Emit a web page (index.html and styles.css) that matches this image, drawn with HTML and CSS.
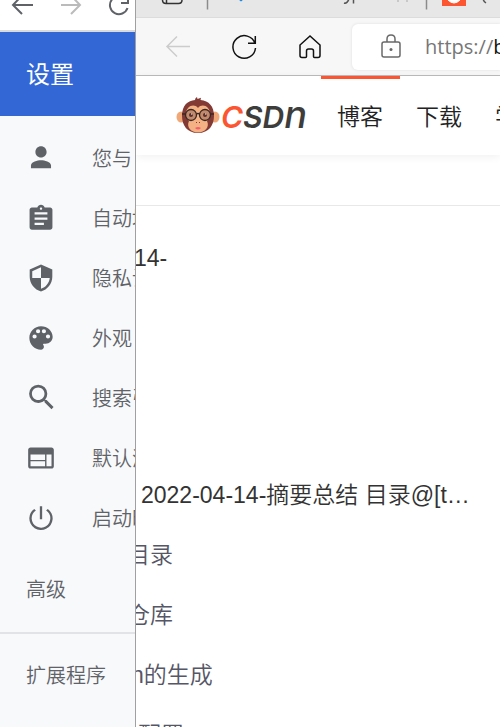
FILE: index.html
```html
<!DOCTYPE html>
<html lang="zh-CN">
<head>
<meta charset="utf-8">
<title>设置</title>
<link rel="stylesheet" href="styles.css">
</head>
<body>
<aside class="settings">
  <div class="settings-bar">
    <svg class="bar-icon" viewBox="0 0 24 24"><path d="M22 11H3M11 1.500 2 11l9 9"/></svg>
    <svg class="bar-icon faded" viewBox="0 0 24 24"><path d="M2 11h18M12 1.500l9 9.500-9 9"/></svg>
    <svg class="bar-icon" viewBox="0 0 24 24"><path d="M18.500 5a9 9 0 1 0 2 9M21 2v7h-7"/></svg>
  </div>
  <h1 class="settings-title">设置</h1>
  <nav class="settings-nav">
    <a class="item" href="#"><svg viewBox="0 0 24 24"><path d="M12 11.500c2.700 0 4.800-2 4.800-4.700S14.700 2 12 2 7.200 4.100 7.200 6.800s2.100 4.700 4.800 4.700zm0 2.500c-3 0-8.600 1.300-8.600 4.500v2.300h17.200v-2.300c0-3.200-5.600-4.500-8.600-4.500z"/></svg><span>您与</span></a>
    <a class="item" href="#"><svg viewBox="0 0 24 24"><path d="M19.800 3h-4.600C14.800 1.800 13.300.6 12 .6S9.200 1.800 8.800 3H4.200c-1.100 0-2 .9-2 2v15c0 1.100.9 2 2 2h15.600c1.100 0 2-.9 2-2V5c0-1.100-.9-2-2-2zM12 3c.6 0 1 .4 1 1s-.4 1-1 1-1-.4-1-1 .4-1 1-1zm2.500 15H6.500v-2h8v2zm3-4.500h-11v-2h11v2zm0-4.500h-11V7h11v2z"/></svg><span>自动填</span></a>
    <a class="item" href="#"><svg viewBox="0 0 24 24"><path d="M12 .5 2.300 4.800v6.200c0 5.900 4.140 11.200 9.700 12.500 5.560-1.300 9.700-6.600 9.700-12.500V4.800L12 .5zm0 11.500h7.500c-.53 4.400-3.580 8.100-7.500 9.200V12H4.500V6.200L12 2.800V12z"/></svg><span>隐私设</span></a>
    <a class="item" href="#"><svg viewBox="0 0 24 24"><path d="M12 2C6.490 2 2 6.490 2 12s4.490 10 10 10c1.380 0 2.500-1.120 2.500-2.500 0-.61-.23-1.200-.64-1.670-.08-.1-.13-.21-.13-.33 0-.28.22-.5.5-.5H16c3.310 0 6-2.690 6-6 0-4.960-4.490-9-10-9zm-5.500 10.500a1.800 1.800 0 1 1 0-3.600 1.800 1.800 0 0 1 0 3.600zm3-4.500a1.800 1.800 0 1 1 0-3.600 1.800 1.800 0 0 1 0 3.600zm5 0a1.800 1.800 0 1 1 0-3.600 1.800 1.800 0 0 1 0 3.600zm3.500 4.500a1.800 1.800 0 1 1 0-3.600 1.800 1.800 0 0 1 0 3.600z"/></svg><span>外观</span></a>
    <a class="item" href="#"><svg viewBox="1.500 2.500 20 20"><path d="M15.500 14h-.79l-.28-.27A6.470 6.470 0 0 0 16 9.500 6.500 6.500 0 1 0 9.500 16c1.610 0 3.090-.59 4.230-1.570l.27.28v.79l5 4.990L20.490 19l-4.990-5zm-6 0C7.010 14 5 11.990 5 9.500S7.010 5 9.500 5 14 7.010 14 9.500 11.990 14 9.500 14z"/></svg><span>搜索引</span></a>
    <a class="item" href="#"><svg viewBox="0 0 24 24"><path d="M21 3H3C1.900 3 1 3.900 1 5v14c0 1.100.9 2 2 2h18c1.100 0 2-.9 2-2V5c0-1.100-.9-2-2-2zm-5.500 16H3v-4.200h12.500V19zm0-5.200H3V9h12.500v4.800zM21 19h-4.300V9H21v10z"/></svg><span>默认浏</span></a>
    <a class="item" href="#"><svg viewBox="0 0 24 24"><path d="M13 2h-2v11h2V2zm4.800 2.200-1.400 1.400A7.960 7.960 0 0 1 20 12a8 8 0 1 1-12.400-6.400L6.200 4.200A9.960 9.960 0 0 0 2 12a10 10 0 1 0 15.800-7.800z"/></svg><span>启动时</span></a>
    <a class="group" href="#">高级</a>
    <a class="group extension" href="#">扩展程序</a>
  </nav>
</aside>
<main class="browser">
  <div class="tabs">
    <svg class="tab-art" viewBox="0 0 364 17" preserveAspectRatio="xMinYMin slice">
      <g fill="none" stroke="#333" stroke-width="1.500"><path d="M26.500-8V0q0 3.500 3.500 3.500h12.500q3.500 0 3.500-3.500v-8M30.500-3v6"/></g>
      <path d="M71.500 0v9.500M290.500 0v9.500" stroke="#8b8b8b" stroke-width="1.500"/>
      <path d="m102-1 3 2.500L108-1" fill="#1687e5"/>
      <path d="M306 0h24v6h-24z" fill="#fc5531"/>
      <path d="M312 0q6 6 12 0" fill="#fff" stroke="#fff" stroke-width="1"/>
      <path d="M208 3q3 1 5-4M217.500-1v4.500M347-2q0 3 3 5" fill="none" stroke="#555" stroke-width="1.500"/>
      <path d="M261 1h2M270 1h2" stroke="#aaa"/>
    </svg>
  </div>
  <div class="toolbar">
    <button class="tool" aria-label="后退"><svg viewBox="0 0 28 28"><path d="M26 13.500H3M13 3.500 3 13.500l10 10" stroke="#ccc"/></svg></button>
    <button class="tool" aria-label="刷新"><svg viewBox="0 0 28 28"><path d="M25 10.500A11.300 11.300 0 1 0 25.500 15M25.300 3v7.300H18" stroke="#111"/></svg></button>
    <button class="tool" aria-label="主页"><svg viewBox="0 0 28 28"><path d="M14 3 4 12v10.500q0 2 2 2h3.500q1 0 1-1V18q0-2 2-2h3q2 0 2 2v5.500q0 1 1 1H22q2 0 2-2V12z" stroke="#111"/></svg></button>
    <div class="address">
      <svg viewBox="0 0 24 28"><path d="M5 9h14q2 0 2 2v11q0 2-2 2H5q-2 0-2-2V11q0-2 2-2zM8 9V6q0-4 4-4t4 4v3" fill="none" stroke="#6a6a6a" stroke-width="1.500"/><circle cx="12" cy="16.500" r="1.500" fill="#666"/></svg>
      <span class="url">https://<b>b</b></span>
    </div>
  </div>
  <header class="site">
    <a class="logo" href="#">
      <svg viewBox="0 0 44 38">
        <ellipse cx="5" cy="20" rx="4.500" ry="5.500" fill="#f0a878"/><ellipse cx="39" cy="20" rx="4.500" ry="5.500" fill="#f0a878"/>
        <path d="M6 19C6 8 12 3.500 19 3q0-2 2-3l.5 2L25 .8 24.500 3C33 4 38 9 38 19c0 9-5 17-16 17S6 28 6 19z" fill="#843a34"/>
        <path d="M22 11c-4-5-12-2-12 6 0 4 2 6 3 7-3 6 2 11.500 9 11.500S34 30 31 24c1-1 3-3 3-7 0-8-8-11-12-6z" fill="#f3b184"/>
        <g stroke="#382725" stroke-width="1.300"><circle cx="15" cy="18" r="5.500" fill="#c28a6a"/><circle cx="29" cy="18" r="5.500" fill="#c28a6a"/><path d="M20.500 17q1.500-1 3 0M6 17h3.500m25 0H38" fill="none"/></g>
        <circle cx="15" cy="18" r="2" fill="#5c2f2c"/><circle cx="29" cy="18" r="2" fill="#5c2f2c"/><circle cx="15.800" cy="17" r=".7" fill="#fff"/><circle cx="29.800" cy="17" r=".7" fill="#fff"/>
        <path d="M20 25.500h1m2 0h1" stroke="#843a34" stroke-width="1.200"/><path d="M19 31q3-2 6 0-3 3-6 0z" fill="#f45f70"/>
      </svg>
      <span class="brand"><span class="brand-c">C</span>SD<span class="brand-n">n</span></span>
    </a>
    <nav class="site-nav"><a class="active" href="#">博客</a><a href="#">下载</a><a href="#">学</a></nav>
  </header>
  <div class="subbar"></div>
  <article class="article">
    <p class="heading">14-</p>
    <h2 class="summary">2022-04-14-摘要总结 目录@[t…</h2>
    <ul class="toc">
      <li>目录</li>
      <li>仓库</li>
      <li class="level-two">n的生成</li>
      <li class="level-three">配置</li>
    </ul>
  </article>
</main>
</body>
</html>
```

FILE: styles.css
```css
* { box-sizing: border-box; }
body {
  margin: 0;
  height: 100vh;
  display: grid;
  grid-template-columns: 136px minmax(0, 1fr);
  overflow: hidden;
  background: #fff;
  font-family: "Liberation Sans", "Noto Sans CJK SC", sans-serif;
}
a { color: inherit; text-decoration: none; }
svg { display: block; flex: none; }

.settings {
  overflow: hidden;
  border-right: 1px solid #a0a0a0;
  background: #f8f9fb;
  color: #5f6368;
  white-space: nowrap;
}
.settings-bar {
  display: flex;
  gap: 24px;
  height: 32px;
  padding-left: 11px;
  padding-bottom: 10px;
  align-items: end;
  border-bottom: 2px solid #d9dadc;
  background: #fff;
  overflow: hidden;
}
.bar-icon { width: 24px; height: 28px; fill: none; stroke: #5f6368; stroke-width: 2; }
.faded { stroke: #bbb; }
.settings-title {
  margin: 0;
  padding-left: 26px;
  padding-top: 2px;
  background: #3367d6;
  color: #fff;
  font-size: 24px;
  font-weight: 400;
  line-height: 82px;
}
.settings-nav { padding-top: 12px; font-size: 20px; font-weight: 350; }
.item { display: flex; align-items: center; height: 60px; padding-left: 27px; }
.item svg { width: 28px; height: 28px; margin-right: 37px; fill: #5f6368; }
.item span { padding-bottom: 2px; }
.group { display: block; padding-left: 26px; line-height: 84px; }
.extension { border-top: 2px solid #e1e3e6; }

.browser { overflow: hidden; display: flex; flex-direction: column; }
.tabs { height: 18px; flex: none; background: #e7e7e7; border-bottom: 1px solid #dcdcdc; }
.tab-art { width: 100%; height: 17px; }
.toolbar {
  display: flex;
  align-items: center;
  flex: none;
  height: 58px;
  padding-left: 28px;
  gap: 38px;
  background: #f7f7f7;
  border-bottom: 1px solid #bbb;
}
.tool { width: 28px; height: 28px; padding: 0; border: 0; background: none; flex: none; }
.tool svg { width: 28px; height: 28px; fill: none; stroke-width: 1.5; }
.address {
  flex: 1;
  height: 46px;
  margin-left: -10px;
  padding-left: 27px;
  display: flex;
  align-items: center;
  border-radius: 6px 0 0 6px;
  background: #fff;
  box-shadow: 0 0 3px #ddd;
  overflow: hidden;
}
.address svg { width: 24px; height: 28px; margin-right: 22px; }
.url { color: #777; font: 20px "Open Sans", sans-serif; }
.url b { color: #111; font-weight: 400; }

.site {
  display: flex;
  flex: none;
  height: 79px;
  padding-left: 40px;
  background: #fff;
  box-shadow: 0 2px 8px #0000000f;
}
.logo { display: flex; align-items: center; width: 145px; flex: none; }
.logo svg { width: 44px; height: 38px; }
.brand { padding-left: 1px; color: #3d3d3b; font: italic 600 30px/38px "Inter", sans-serif; white-space: nowrap; }
.brand-c { color: #fc5531; }
.brand-n { font-size: 38px; font-weight: 500; }
.site-nav { display: flex; color: #222; font-size: 23px; font-weight: 350; line-height: 76px; white-space: nowrap; }
.site-nav a { padding: 3px 17px 0 16px; }
.site-nav .active { padding-top: 0; border-top: 3px solid #fc5531; }
.subbar { flex: none; height: 51px; border-bottom: 1px solid #e8e8e8; }
.article { color: #333; font-size: 23px; font-weight: 350; white-space: nowrap; }
.heading { margin: 32px 0 0 -2px; line-height: 40px; }
.summary { margin: 197px 0 0 5px; font-size: 23px; font-weight: 350; line-height: 40px; }
.toc { margin: 10px 0 0 -9px; padding: 0; list-style: none; color: #555666; line-height: 60px; }
.level-two { padding-left: 4px; }
.level-three { padding-left: 11px; }
```
